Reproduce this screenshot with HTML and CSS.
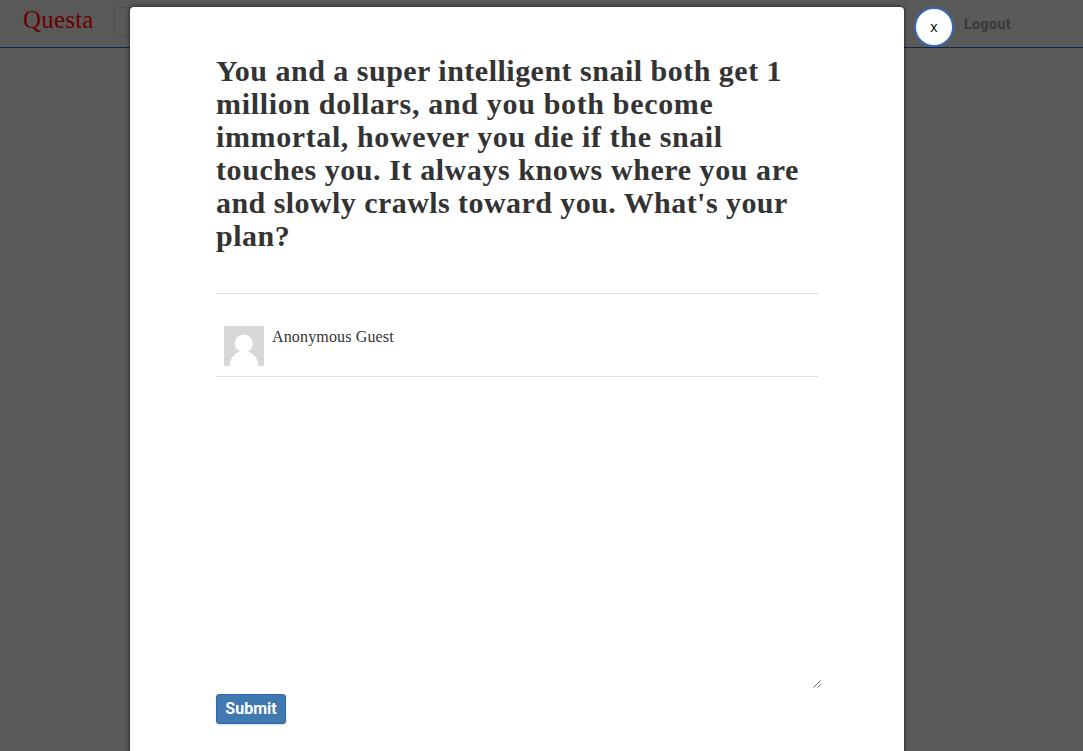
FILE: index.html
```
<!DOCTYPE html>
<html lang="en">
<head>
<meta charset="utf-8">
<title>Questa</title>
<link rel="stylesheet" href="styles.css">
</head>
<body>
<header class="navbar">
  <div class="logo">Questa</div>
  <div class="search"></div>
  <div class="logout">Logout</div>
</header>
<main class="modal">
  <h1 class="question">
    <span class="line l1">You and a super intelligent snail both get 1</span>
    <span class="line l2">million dollars, and you both become</span>
    <span class="line l3">immortal, however you die if the snail</span>
    <span class="line l4">touches you. It always knows where you are</span>
    <span class="line l5">and slowly crawls toward you. What's your</span>
    <span class="line l6">plan?</span>
  </h1>
  <section class="author">
    <svg class="avatar" viewBox="0 0 40 40"><rect width="40" height="40" fill="#d7d7d7"/><circle cx="19.8" cy="17.5" r="9" fill="#fff"/><path d="M5.500 40C6.300 31.500 11 27 16 25.500V23H23.500V25.500C29 27 34 32 34.500 40Z" fill="#fff"/></svg>
    <span class="name">Anonymous Guest</span>
  </section>
  <div class="editor">
    <svg class="grip" viewBox="0 0 8 8"><path d="M.5 7.500 7.500 .5M4.500 7.500 7.500 4.500" stroke="#555" stroke-width=".9" fill="none"/></svg>
  </div>
  <button class="submit">Submit</button>
</main>
<button class="close">x</button>
</body>
</html>
```
FILE: styles.css
```
* { box-sizing: border-box; }
html, body { height: 100%; }
body {
  margin: 0;
  overflow: hidden;
  background: #595959;
  font-family: Georgia, "Liberation Serif", serif;
}
.navbar {
  display: flex;
  height: 48px;
  padding-left: 23px;
  border-bottom: 1px solid #152347;
}
.logo {
  width: 91px;
  padding-top: 6px;
  font-size: 25px;
  line-height: 28px;
  letter-spacing: .2px;
  color: #6b0000;
}
.search {
  width: 300px;
  height: 29px;
  margin-top: 7px;
  border: 1px solid #4f4f4f;
  border-radius: 2px;
}
.logout {
  margin-left: 550px;
  padding-top: 15px;
  font: bold 14px/18px Roboto, sans-serif;
  letter-spacing: .5px;
  color: #383838;
}
.modal {
  position: absolute;
  top: 7px;
  left: 130px;
  width: 774px;
  height: 760px;
  padding: 47px 86px 0;
  background: #fff;
  border-radius: 4px;
  box-shadow: 0 0 4px rgba(0, 0, 0, .75);
}
.question {
  height: 240px;
  margin: 0;
  border-bottom: 1px solid #dedede;
  font-size: 30px;
  line-height: 33px;
  color: #333;
}
.line { display: block; white-space: nowrap; letter-spacing: .5px; }
.l1 { letter-spacing: .49px; }
.l2 { letter-spacing: .67px; }
.l3 { letter-spacing: .61px; }
.l4 { letter-spacing: .57px; }
.l5 { letter-spacing: .44px; }
.author {
  display: flex;
  height: 83px;
  padding: 32px 8px 0;
  gap: 8px;
  border-bottom: 1px solid #dedede;
}
.avatar { width: 40px; height: 40px; }
.name {
  padding-top: 1px;
  font-size: 16px;
  line-height: 20px;
  letter-spacing: .15px;
  color: #333;
}
.editor {
  display: flex;
  align-items: flex-end;
  justify-content: flex-end;
  width: 605px;
  height: 311px;
}
.grip { width: 8px; height: 8px; }
.submit {
  display: block;
  width: 70px;
  height: 30px;
  margin-top: 6px;
  padding: 0;
  border: 1px solid #3366aa;
  border-radius: 3px;
  background: #4078b0;
  box-shadow: 0 1px 2px rgba(0, 0, 0, .15);
  font: bold 16px/28px Roboto, sans-serif;
  color: #fff;
}
.close {
  position: absolute;
  top: 7px;
  left: 914px;
  width: 40px;
  height: 40px;
  padding: 0;
  border: 2px solid #3a68b5;
  border-radius: 50%;
  background: #fff;
  font: 14px/36px "Open Sans", sans-serif;
  color: #000;
}
```
